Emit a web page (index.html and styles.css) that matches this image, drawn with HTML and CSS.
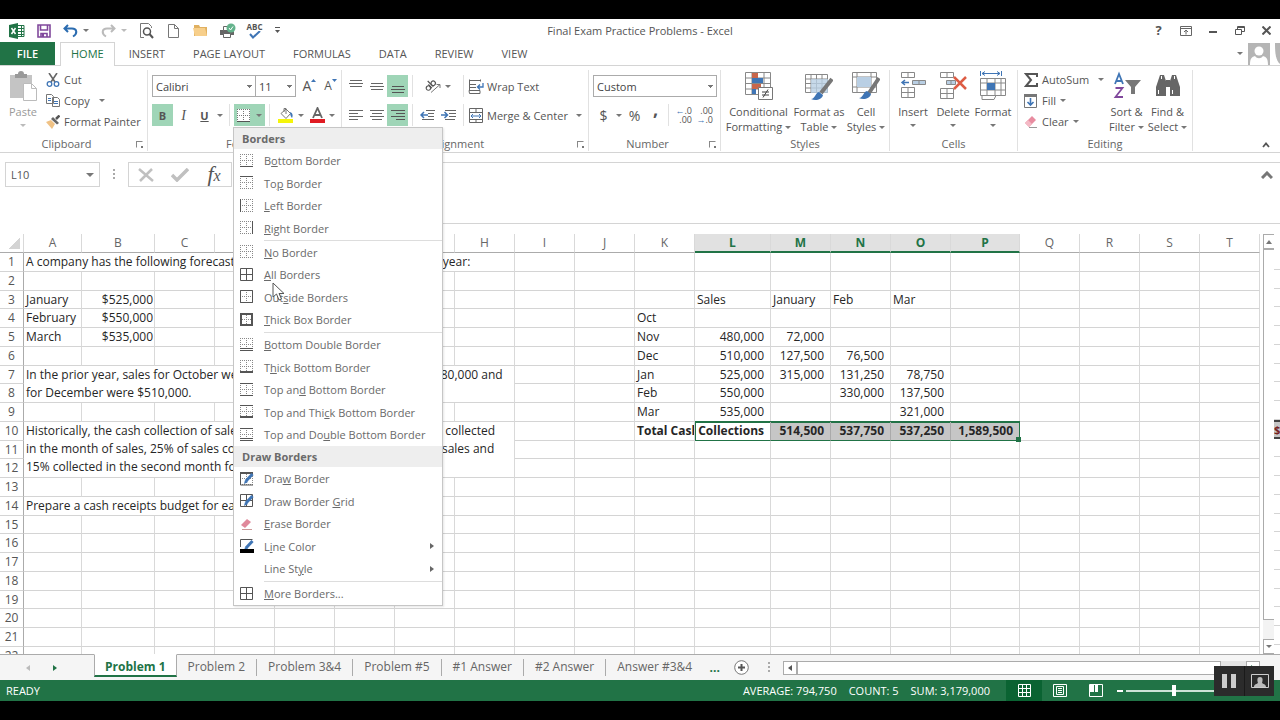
FILE: index.html
```html
<!DOCTYPE html>
<html lang="en">
<head>
    <meta charset="UTF-8">
    <meta name="viewport" content="width=device-width, initial-scale=1.0">
    <title>Final Exam Practice Problems - Excel</title>
    <link rel="stylesheet" href="styles.css">
</head>
<body>
    <header class="titlebar">
        <div class="quick-access">
            <button aria-label="Excel"><svg width="16" height="16"><path fill="#217346" d="M0 2l9-2v16l-9-2z"/><path fill="none" stroke="#217346" d="M9 2.500h6v11H9M9 5.500h6M9 8.500h6M9 11.500h6M12.500 3v10"/><path stroke="#fff" stroke-width="1.500" d="M2.500 5l4 6M6.500 5l-4 6"/></svg></button>
            <button aria-label="Save"><svg width="14" height="14"><path fill="none" stroke="#80489c" stroke-width="1.600" d="M1 1h12v12H1zM3.500 1v5h7V1M4 13V9.500h6V13"/><path fill="#80489c" d="M5 10h2v3H5z"/></svg></button>
            <button class="wide" aria-label="Undo"><svg width="15" height="14"><path fill="none" stroke="#2b6cb0" stroke-width="2" d="M5 1L1.500 4.500 5 8M2 4.500h7c5 0 6 5 1 8"/></svg><i class="caret"></i></button>
            <button class="wide" aria-label="Redo"><svg width="15" height="14"><path fill="none" stroke="#bbb" stroke-width="2" d="M10 1l3.500 3.500L10 8M13 4.500H6c-5 0-6 5-1 8"/></svg><i class="caret pale"></i></button>
            <button aria-label="Print preview"><svg width="15" height="16"><path fill="none" stroke="#777" d="M5 14.500H1.500V.5h8l3 3V5"/><circle cx="8" cy="8.500" r="3.500" fill="none" stroke="#555" stroke-width="1.500"/><path stroke="#555" stroke-width="2" d="M10.500 11l3.500 4"/></svg></button>
            <button aria-label="New"><svg width="11" height="14"><path fill="none" stroke="#777" d="M.5.5h6l4 4v9H.5zM6.500.5v4h4"/></svg></button>
            <button aria-label="Open"><svg width="16" height="13"><path fill="#e0b060" d="M1 12V1h5l1 2h7v9z"/><path fill="#f7cf8b" d="M0 4h12l2 8H2z"/></svg></button>
            <button aria-label="Quick print"><svg width="17" height="16"><path fill="#666" d="M1 7h14v5H1z"/><path fill="#fff" stroke="#666" d="M4.500 3.500h7v4h-7zM4.500 10.500h7v4h-7z"/><circle cx="12" cy="5" r="4.500" fill="#64b38c"/><path fill="none" stroke="#fff" d="M10 5l1.500 2L14 3.500"/></svg></button>
            <button class="spelling" aria-label="Spelling">ABC<svg width="12" height="8"><path fill="none" stroke="#3f75b5" stroke-width="2" d="M1 3l3 3.500L11 0"/></svg></button>
            <button class="narrow" aria-label="Customize"><svg width="7" height="7"><path stroke="#555" d="M1 .5h5"/><path fill="#555" d="M1 3h5L3.500 6z"/></svg></button>
        </div>
        <h1>Final Exam Practice Problems - Excel</h1>
        <div class="window-buttons">
            <button class="help" aria-label="Help">?</button>
            <button aria-label="Ribbon options"><svg width="12" height="10"><path fill="none" stroke="#666" d="M.5.5h11v9H.5zM1 2.500h10M6 8.500v-4M4 6l2-2 2 2"/></svg></button>
            <button aria-label="Minimize"><svg width="8" height="10"><path stroke="#555" stroke-width="2" d="M0 6h8"/></svg></button>
            <button aria-label="Restore"><svg width="10" height="9"><path fill="none" stroke="#555" d="M2.500 3V.5h7v5H7M.5 3.500h6v5h-6zM3 1.500h6"/></svg></button>
            <button aria-label="Close"><svg width="9" height="9"><path stroke="#555" stroke-width="2" d="M.5.5l8 8M8.500.5l-8 8"/></svg></button>
        </div>
    </header>

    <nav class="ribbon-tabs">
        <a class="file" href="#file">FILE</a>
        <a class="active" href="#home">HOME</a>
        <a href="#insert">INSERT</a>
        <a href="#layout">PAGE LAYOUT</a>
        <a href="#formulas">FORMULAS</a>
        <a href="#data">DATA</a>
        <a href="#review">REVIEW</a>
        <a href="#view">VIEW</a>
        <button class="account" aria-label="Account"><i class="caret"></i><svg width="22" height="22"><path fill="#b5b5b5" d="M0 0h22v22H0z"/><circle cx="11" cy="8" r="4.500" fill="#fff"/><path fill="#fff" d="M2 22c0-7 2-8 5-9 2 3 6 3 8 0 3 1 5 2 5 9z"/></svg><svg width="6" height="22"><path fill="#b5b5b5" d="M0 0h6v22C1 18 0 12 0 0z"/></svg></button>
    </nav>

    <section class="ribbon">
        <div class="group clipboard">
            <div class="tools">
                <button class="big disabled"><svg width="28" height="30"><path fill="#c4c4c4" d="M1 4h22v23H1z"/><path fill="#999" d="M6 3h3a3 3 0 0 1 6 0h3v4H6z"/><path fill="#fff" stroke="#bbb" d="M14.500 12.500h8l5 5v12h-13z"/><path fill="none" stroke="#bbb" d="M22.500 12.500v5h5"/></svg><span>Paste</span><i class="caret pale"></i></button>
                <div class="stack">
                    <button><svg width="14" height="14"><path stroke="#666" stroke-width="1.600" d="M3 0l6 9M11 0L5 9"/><circle cx="3.500" cy="11" r="2.300" fill="none" stroke="#3f75b5" stroke-width="1.300"/><circle cx="10.500" cy="11" r="2.300" fill="none" stroke="#3f75b5" stroke-width="1.300"/></svg>Cut</button>
                    <button><svg width="14" height="13"><path fill="#fff" stroke="#777" d="M.5.5h5l2 2v7h-7zM6.500 3.500h5l2 2v7h-7z"/><path stroke="#3f75b5" d="M2 4.500h3M2 6.500h3M8 7.500h4M8 9.500h4"/></svg>Copy<i class="caret spaced"></i></button>
                    <button><svg width="14" height="14"><path fill="#f0c285" d="M0 7l5-2 4 4-3 5z"/><path fill="#666" d="M5 4l2-2 6 6-2 1.500z"/><path stroke="#555" stroke-width="2.500" d="M10 4l3.500-3.500"/></svg>Format Painter</button>
                </div>
            </div>
            <footer><span>Clipboard</span><button class="launcher" aria-label="Clipboard settings"></button></footer>
        </div>

        <div class="group font">
            <div class="rows">
                <div class="row">
                    <select class="font-name" aria-label="Font"><option>Calibri</option></select>
                    <select class="font-size" aria-label="Font size"><option>11</option></select>
                    <button class="icon grow" aria-label="Increase font size">A<svg width="5" height="4"><path fill="#3f75b5" d="M0 3h5L2.500 0z"/></svg></button>
                    <button class="icon shrink" aria-label="Decrease font size">A<svg width="5" height="4"><path fill="#3f75b5" d="M0 0h5L2.500 3z"/></svg></button>
                </div>
                <div class="row">
                    <button class="icon on"><b>B</b></button>
                    <button class="icon italic"><i>I</i></button>
                    <button class="icon underline"><u>U</u></button>
                    <button class="drop" aria-label="Underline options"><i class="caret"></i></button>
                    <span class="sep"></span>
                    <div class="borders">
                        <button class="on" aria-label="Borders"><svg width="13" height="13"><path fill="#fff" d="M0 0h13v13H0z"/><path fill="none" stroke="#777" stroke-dasharray="1 1" d="M.5 0v13M12.500 0v13M6.500 0v13M0 .5h13M0 6.500h13"/><path stroke="#555" d="M0 12.500h13"/></svg><i class="caret"></i></button>
                        <ul class="menu" id="bordersMenu"></ul>
                    </div>
                    <span class="sep"></span>
                    <button class="color" aria-label="Fill color"><svg width="17" height="16"><path fill="#fff" stroke="#777" d="M4 6.500L9 2l4.500 4.500L9 11.500z"/><path fill="none" stroke="#777" d="M7 5V1.500h2V7"/><path fill="#3f75b5" d="M13 5c3 1 3 4 2 6-1-1-2-3-2-6z"/><path fill="#f5f50a" d="M1 12h15v4H1z"/></svg><i class="caret"></i></button>
                    <button class="color" aria-label="Font color"><svg width="15" height="16"><path fill="none" stroke="#666" stroke-width="1.800" d="M3 11L7.500 1 12 11M4.500 8h6"/><path fill="#e01b22" d="M0 12h15v4H0z"/></svg><i class="caret"></i></button>
                </div>
            </div>
            <footer><span>Font</span><button class="launcher" aria-label="Font settings"></button></footer>
        </div>

        <div class="group alignment">
            <div class="rows">
                <div class="row">
                    <button class="icon" aria-label="Top align"><svg width="14" height="14"><path stroke="#666" d="M1 1.500h12M0 4.500h14M1 7.500h12"/></svg></button>
                    <button class="icon" aria-label="Middle align"><svg width="14" height="14"><path stroke="#666" d="M1 4.500h12M0 7.500h14M1 10.500h12"/></svg></button>
                    <button class="icon on" aria-label="Bottom align"><svg width="14" height="14"><path stroke="#555" d="M1 7.500h12M0 10.500h14M1 13.500h12"/></svg></button>
                    <span class="sep"></span>
                    <button class="double" aria-label="Orientation"><svg width="16" height="14"><g transform="rotate(-45 8 8)" fill="none" stroke="#555" stroke-width="1.200"><circle cx="4" cy="5.500" r="2.200"/><path d="M6.500 3v5M8.500 0v8"/><circle cx="10.800" cy="5.500" r="2.200"/></g><path fill="none" stroke="#777" d="M6 13.500L15 5.500M11.500 5.500H15v3.500"/></svg><i class="caret"></i></button>
                    <span class="sep"></span>
                    <button class="text"><svg width="16" height="15"><path fill="none" stroke="#666" d="M1 1.500h11M12.500.5v2M1 5.500h7M1 8.500h7M1 11.500h11v3H1.500zM1.500.5v11"/><path fill="none" stroke="#3f75b5" stroke-width="1.300" d="M15 4v4h-5M12 5.500L9.500 8l2.500 2.500"/></svg>Wrap Text</button>
                </div>
                <div class="row">
                    <button class="icon" aria-label="Align left"><svg width="14" height="14"><path stroke="#666" d="M0 2.500h14M0 5.500h9M0 8.500h14M0 11.500h9"/></svg></button>
                    <button class="icon" aria-label="Center"><svg width="14" height="14"><path stroke="#666" d="M0 2.500h14M2 5.500h10M0 8.500h14M2 11.500h10"/></svg></button>
                    <button class="icon on" aria-label="Align right"><svg width="14" height="14"><path stroke="#555" d="M0 2.500h14M5 5.500h9M0 8.500h14M5 11.500h9"/></svg></button>
                    <span class="sep"></span>
                    <button class="icon" aria-label="Decrease indent"><svg width="16" height="12"><path stroke="#666" d="M6 1.500h9M8 4.500h6M8 7.500h6M2 10.500h12"/><path fill="none" stroke="#3f75b5" stroke-width="1.500" d="M8 6H1M4 3L1 6l3 3"/></svg></button>
                    <button class="icon" aria-label="Increase indent"><svg width="16" height="12"><path stroke="#666" d="M4 1.500h11M8 4.500h7M8 7.500h7M4 10.500h10"/><path fill="none" stroke="#3f75b5" stroke-width="1.500" d="M0 6h6M3.500 3l3 3-3 3"/></svg></button>
                    <span class="sep"></span>
                    <button class="text"><svg width="16" height="15"><path fill="none" stroke="#666" d="M1.500.5h13v14h-13zM1 4.500h14M1 11.500h14M8 .5v4M8 11.500v3"/><path fill="none" stroke="#3f75b5" d="M3 8h10M5 6L3 8l2 2M11 6l2 2-2 2"/></svg>Merge &amp; Center<i class="caret spaced"></i></button>
                </div>
            </div>
            <footer><span>Alignment</span><button class="launcher" aria-label="Alignment settings"></button></footer>
        </div>

        <div class="group number">
            <div class="rows">
                <div class="row"><select class="format" aria-label="Number format"><option>Custom</option></select></div>
                <div class="row">
                    <button class="icon sign">$</button>
                    <button class="drop" aria-label="Currency"><i class="caret"></i></button>
                    <button class="icon sign">%</button>
                    <button class="icon comma" aria-label="Comma style"><b>,</b></button>
                    <span class="sep"></span>
                    <button class="icon decimals" aria-label="Increase decimal"><span><em>←</em>.0</span><span>.00</span></button>
                    <button class="icon decimals" aria-label="Decrease decimal"><span>.00</span><span><em>→</em>.0</span></button>
                </div>
            </div>
            <footer><span>Number</span><button class="launcher" aria-label="Number settings"></button></footer>
        </div>

        <div class="group styles">
            <div class="tools">
                <button class="big"><svg width="28" height="30"><path fill="#fff" stroke="#888" d="M.5 1.500h25v22H.5zM.5 7h25M.5 12.500h25M.5 18h25M7 1.500v22M19 1.500v22"/><path fill="#c8664b" d="M7 2h6v5H7zM7 13h9v5H7z"/><path fill="#3f75b5" d="M7 7h11v5H7zM7 18h4v5H7z"/><path fill="#fff" stroke="#777" d="M13.500 16.500h14v12h-14z"/><path stroke="#444" d="M17 21h7M17 24h7M23 18.500l-5 8"/></svg><span>Conditional</span><span>Formatting<i class="caret"></i></span></button>
                <button class="big"><svg width="28" height="30"><path fill="#fff" stroke="#888" d="M.5 3.500h22v18H.5zM.5 8h22M.5 12.500h22M.5 17h22M6 3.500v18M11.500 3.500v18M17 3.500v18"/><path fill="#b9cfe4" opacity=".8" d="M6 8h17v14H6z"/><path stroke="#777" stroke-width="4" d="M27 8L16 22"/><path fill="#3f75b5" d="M6 28c4 0 4-6 8-7l4 3c-1 5-8 6-12 4z"/></svg><span>Format as</span><span>Table<i class="caret"></i></span></button>
                <button class="big"><svg width="28" height="30"><path fill="#fff" stroke="#888" d="M.5 1.500h24v20H.5zM.5 6h24M.5 16h24M5 1.500v20M19 1.500v20"/><path fill="#b9cfe4" d="M5 6h14v10H5z"/><path stroke="#777" stroke-width="4" d="M27 7L17 22"/><path fill="#3f75b5" d="M7 27c4 0 4-6 8-7l4 3c-1 5-8 6-12 4z"/></svg><span>Cell</span><span>Styles<i class="caret"></i></span></button>
            </div>
            <footer><span>Styles</span></footer>
        </div>

        <div class="group cells">
            <div class="tools">
                <button class="big"><svg width="26" height="30"><path fill="#fff" stroke="#888" d="M1.500 1.500h13v5h-13zM8 1.500v5M1.500 16.500h13v10h-13zM1.500 21.500h13M8 16.500v10"/><path fill="#b9cfe4" stroke="#888" d="M12.500 9.500h13v4h-13zM19 9.500v4"/><path fill="none" stroke="#3f75b5" stroke-width="1.500" d="M9 11.500H2M5 9l-3 2.500L5 14"/></svg><span>Insert</span><i class="caret"></i></button>
                <button class="big"><svg width="28" height="30"><path fill="#fff" stroke="#888" d="M1.500 1.500h13v5h-13zM8 1.500v5M1.500 17.500h13v10h-13zM1.500 22.500h13M8 17.500v10"/><path fill="#b9cfe4" stroke="#888" d="M7.500 9.500h9v4h-9zM12 9.500v4"/><path stroke="#dd5c44" stroke-width="2.500" d="M15 6l12 12M27 6L15 18"/></svg><span>Delete</span><i class="caret"></i></button>
                <button class="big"><svg width="27" height="30"><path fill="none" stroke="#3f75b5" d="M.5 0v5M21.500 0v5M2 2.500h18M5 .5l-3 2 3 2M17 .5l3 2-3 2"/><path fill="#fff" stroke="#888" d="M.5 7.500h25v17H.5zM.5 12h25M.5 19h25M7 7.500v17M15 7.500v17M21 7.500v17M2 24.500v4h12l2-4"/><path fill="#3f75b5" d="M7 12h8v7H7z"/></svg><span>Format</span><i class="caret"></i></button>
            </div>
            <footer><span>Cells</span></footer>
        </div>

        <div class="group editing">
            <div class="tools">
                <div class="stack">
                    <button><svg width="14" height="14"><path fill="none" stroke="#555" stroke-width="2" d="M13 4V1H2l5 6-5 6h11v-3"/></svg>AutoSum<i class="caret spaced"></i></button>
                    <button><svg width="14" height="14"><path fill="#fff" stroke="#777" d="M.5.5h12v13H.5z"/><path fill="#777" d="M0 0h13v3H0z"/><path fill="none" stroke="#3f75b5" stroke-width="1.600" d="M6.500 4v7M3.500 8l3 3 3-3"/></svg>Fill<i class="caret"></i></button>
                    <button><svg width="14" height="14"><path fill="#e88ca0" d="M1 8l7-7 4 4-7 7z"/><path fill="#f4b9c5" d="M1 8l3-3 4 4-3 3z"/><path stroke="#999" d="M5 12.500h8"/></svg>Clear<i class="caret"></i></button>
                </div>
                <button class="big"><svg width="28" height="30"><path fill="none" stroke="#3f75b5" stroke-width="1.800" d="M2 13L6 3l4 10M3.500 10h5"/><path fill="none" stroke="#80489c" stroke-width="1.800" d="M2.500 17h7l-7 9h7.500"/><path fill="#777" d="M12 9h16l-6 7v7h-4v-7z"/></svg><span>Sort &amp;</span><span>Filter<i class="caret"></i></span></button>
                <button class="big"><svg width="26" height="30"><path fill="#666" d="M5 4h4l2 6v15H1V16zM17 4h4l4 12v9H15V10zM11 9h4v7h-4z"/><path fill="#fff" d="M6 5h1v3H6zM19 5h1v3h-1zM3 19h1v4H3zM17 19h1v4h-1z"/></svg><span>Find &amp;</span><span>Select<i class="caret"></i></span></button>
            </div>
            <footer><span>Editing</span></footer>
        </div>
        <button class="collapse" aria-label="Collapse ribbon"><svg width="8" height="6"><path fill="none" stroke="#555" stroke-width="1.800" d="M1 5l3-3.500L7 5"/></svg></button>
    </section>

    <section class="formula-bar">
        <div class="name-box"><input type="text" value="L10" aria-label="Name box"><i class="caret large"></i></div>
        <span class="dots"></span>
        <div class="fx">
            <button aria-label="Cancel"><svg width="16" height="14"><path fill="none" stroke="#c0c0c0" stroke-width="2.500" d="M1 1l14 12M14 1L2 13"/></svg></button>
            <button aria-label="Enter"><svg width="18" height="14"><path fill="none" stroke="#c0c0c0" stroke-width="3.500" d="M1 7l5 5L17 1"/></svg></button>
            <button class="fn" aria-label="Insert function"><i>f<small>x</small></i></button>
        </div>
        <div class="formula"><textarea aria-label="Formula"></textarea><button aria-label="Collapse formula bar"><svg width="12" height="8"><path fill="none" stroke="#777" stroke-width="3" d="M1 7l5-5 5 5"/></svg></button></div>
    </section>

    <main class="sheet">
        <div class="grid">
            <table>
                <colgroup id="cols"></colgroup>
                <thead id="head"></thead>
                <tbody id="rows"></tbody>
            </table>
        </div>
        <div class="scroll-y">
            <button aria-label="Scroll up"><i class="caret up"></i></button>
            <span class="thumb"></span>
            <button aria-label="Scroll down"><i class="caret"></i></button>
        </div>
        <div class="edge" id="edge"></div>
    </main>

    <nav class="sheet-tabs">
        <button aria-label="Previous sheet"><i class="arrow left"></i></button>
        <button aria-label="Next sheet"><i class="arrow right"></i></button>
        <a class="active" href="#p1">Problem 1</a>
        <a href="#p2">Problem 2</a>
        <a href="#p3">Problem 3&amp;4</a>
        <a href="#p5">Problem #5</a>
        <a href="#a1">#1 Answer</a>
        <a href="#a2">#2 Answer</a>
        <a class="last" href="#a3">Answer #3&amp;4</a>
        <button class="more">...</button>
        <button aria-label="New sheet"><svg width="15" height="15"><circle cx="7.500" cy="7.500" r="6.800" fill="#fff" stroke="#777"/><path stroke="#555" stroke-width="2" d="M4 7.500h7M7.500 4v7"/></svg></button>
        <span class="dots"></span>
        <div class="scroll-x">
            <button aria-label="Scroll left"><i class="arrow left dark"></i></button>
            <span class="thumb"></span>
            <button class="end" aria-label="Scroll right"><i class="arrow right"></i></button>
        </div>
    </nav>

    <footer class="status">
        <span class="ready">READY</span>
        <span>AVERAGE: 794,750</span>
        <span>COUNT: 5</span>
        <span>SUM: 3,179,000</span>
        <div class="views">
            <button class="on" aria-label="Normal"><svg width="13" height="13"><path fill="none" stroke="#fff" d="M.5.5h12v12H.5zM.5 4.500h12M.5 8.500h12M4.500.5v12M8.500.5v12"/></svg></button>
            <button aria-label="Page layout"><svg width="14" height="13"><path fill="none" stroke="#fff" d="M.5.5h13v12H.5zM3.500 2.500h7v8h-7zM5 4.500h4M5 6.500h4M5 8.500h4"/></svg></button>
            <button aria-label="Page break"><svg width="14" height="13"><path fill="none" stroke="#fff" d="M.5.5h13v12H.5z"/><path fill="#fff" d="M1 1h4v7H1zM6 1h3v7H6z"/></svg></button>
        </div>
        <button class="zoom-out" aria-label="Zoom out"></button>
        <input type="range" aria-label="Zoom" min="0" max="100" value="50">
    </footer>

    <div class="recorder">
        <button aria-label="Pause"><svg width="14" height="14"><path fill="#ccc" d="M0 0h5v14H0zM9 0h5v14H9z"/></svg></button>
        <button aria-label="Webcam"><svg width="18" height="14"><path fill="none" stroke="#ccc" d="M.5.500h17v13H.5z"/><path fill="#bbb" d="M3 13c0-3 3-3 4-4-1-3-1-6 2-6s3 3 2 6c1 1 4 1 4 4z"/></svg></button>
    </div>
    <svg class="pointer" width="13" height="19" aria-hidden="true"><path fill="#fff" stroke="#555" d="M1 1v14l3.500-3 2.500 6 2.500-1L7 11.500h5z"/></svg>

    <script src="script.js"></script>
</body>
</html>
```
FILE: styles.css
```css
* {
    box-sizing: border-box;
}
body {
    margin: 0;
    padding: 19px 0;
    height: 100vh;
    display: flex;
    flex-direction: column;
    background: #000;
    color: #555;
    font-family: "Open Sans", "Noto Sans", sans-serif;
    font-size: 11px;
    line-height: 15px;
    overflow: hidden;
}
button, input, select, textarea {
    font: inherit;
    color: inherit;
    margin: 0;
    padding: 0;
    border: none;
    border-radius: 0;
    background: none;
}
button {
    display: flex;
    align-items: center;
    justify-content: center;
    white-space: nowrap;
}
a {
    color: inherit;
    text-decoration: none;
}
svg {
    flex: none;
}

/* small triangles */
.caret {
    flex: none;
    display: inline-block;
    border: 3px solid transparent;
    border-top-color: #777;
    border-bottom: none;
}
.caret.pale {
    border-top-color: #bbb;
}
.caret.large {
    border-width: 4px;
    border-bottom: none;
}
.caret.up {
    border-top: none;
    border-bottom: 4px solid #777;
}
.caret.spaced {
    margin-left: 5px;
}
.arrow {
    border: 4px solid transparent;
    border-width: 3px 4px;
}
.arrow.left {
    border-left: none;
    border-right-color: #bbb;
}
.arrow.left.dark {
    border-right-color: #555;
}
.arrow.right {
    border-right: none;
    border-left-color: #217346;
}

/* title bar */
.titlebar {
    display: grid;
    grid-template-columns: 1fr auto 1fr;
    height: 23px;
    background: #fff;
}
.titlebar h1 {
    margin: 0;
    font-size: 11px;
    font-weight: normal;
    line-height: 23px;
}
.quick-access, .window-buttons {
    display: flex;
}
.quick-access {
    padding-left: 3px;
}
.quick-access button, .window-buttons button {
    width: 27px;
}
.quick-access .wide {
    width: 38px;
    gap: 5px;
}
.quick-access .narrow {
    width: 18px;
}
.quick-access .spelling {
    flex-direction: column;
    font-size: 8px;
    font-weight: bold;
    line-height: 8px;
}
.window-buttons {
    justify-content: flex-end;
}
.help {
    font-size: 13px;
    font-weight: bold;
}

/* ribbon tabs */
.ribbon-tabs {
    display: flex;
    height: 24px;
    background: #fff;
    border-bottom: 1px solid #d4d4d4;
    line-height: 24px;
}
.ribbon-tabs a {
    padding: 0 14px;
}
.ribbon-tabs .file {
    width: 55px;
    margin-right: 5px;
    text-align: center;
    background: #217346;
    color: #fff;
    font-weight: 600;
}
.ribbon-tabs .active {
    height: 24px;
    padding: 0 10px;
    border: 1px solid #d4d4d4;
    border-bottom: none;
    background: #fff;
    color: #217346;
    line-height: 22px;
}
.account {
    margin-left: auto;
    gap: 5px;
}
.account svg:last-child {
    margin-right: -1px;
}

/* ribbon */
.ribbon {
    display: flex;
    height: 87px;
    background: #fff;
    border-bottom: 1px solid #d4d4d4;
}
.group {
    display: flex;
    flex-direction: column;
    justify-content: space-between;
    margin: 4px 0 1px;
    border-right: 1px solid #e1e1e1;
}
.clipboard { width: 148px; }
.font { width: 194px; }
.alignment { width: 247px; }
.number { width: 132px; }
.styles { width: 169px; }
.cells { width: 128px; }
.editing { width: 175px; }
.group footer {
    display: flex;
    align-items: center;
    height: 15px;
    color: #666;
}
.group footer span {
    flex: 1;
    text-align: center;
}
.launcher {
    width: 7px;
    height: 7px;
    margin: 2px 4px 0 3px;
    border: 1px solid #888;
    border-right-color: transparent;
    border-bottom-color: transparent;
    background: linear-gradient(#777, #777) 4px 4px / 2px 2px no-repeat;
}
.tools {
    display: flex;
}
.stack {
    margin-top: -1px;
}
.stack button {
    height: 21px;
    gap: 4px;
}
.clipboard .tools {
    padding-left: 4px;
}
.clipboard .stack {
    padding-left: 4px;
}
.big {
    flex-direction: column;
    justify-content: flex-start;
    width: 38px;
    padding-top: 1px;
}
.big svg {
    margin-bottom: 3px;
}
.big > .caret {
    margin-top: 5px;
}
.big span .caret {
    margin: 0 0 2px 3px;
}
.disabled {
    color: #999;
}
.styles .tools {
    padding-left: 4px;
}
.styles .big:nth-child(1) { width: 67px; }
.styles .big:nth-child(2) { width: 54px; }
.styles .big:nth-child(3) { width: 40px; }
.cells .tools {
    padding-left: 3px;
}
.cells .big {
    width: 40px;
}
.editing .tools {
    padding-left: 6px;
}
.editing .stack {
    width: 82px;
}
.editing .big {
    width: 41px;
}
.rows {
    display: flex;
    flex-direction: column;
    gap: 7px;
    padding: 5px 0 0 4px;
}
.row {
    display: flex;
    height: 22px;
}
.row .icon {
    width: 21px;
}
.on {
    background: #9fd5b7;
}
.row .drop {
    width: 10px;
}
.row .double {
    width: 42px;
    gap: 4px;
}
.row .text {
    gap: 3px;
}
.sep {
    width: 1px;
    margin: 0 4px;
    background: #e1e1e1;
}
.number .sep {
    margin: 0 2px;
}
.alignment .rows {
    padding-left: 3px;
}
select {
    appearance: none;
    height: 22px;
    padding: 0 3px;
    border: 1px solid #ababab;
    background: conic-gradient(from -45deg at 50% 100%, #777 90deg, transparent 0) right 3px center / 6px 3px no-repeat;
    background-color: #fff;
    color: #444;
}
.font-name {
    width: 104px;
}
.font-size {
    width: 41px;
    margin-left: -1px;
}
.format {
    width: 124px;
}
.grow, .shrink {
    align-items: flex-start;
}
.row .grow {
    font-size: 14px;
    line-height: 22px;
    margin-left: 3px;
}
.row .shrink {
    font-size: 12px;
    line-height: 22px;
}
.grow svg, .shrink svg {
    margin-top: 4px;
}
.row .italic {
    font-family: "Liberation Serif", serif;
    font-size: 14px;
}
.underline {
    font-weight: bold;
}
.borders {
    position: relative;
}
.borders > button {
    width: 31px;
    height: 22px;
    gap: 6px;
}
.row .color {
    width: 32px;
    gap: 4px;
}
.row .sign {
    font-size: 14px;
}
.row .comma {
    font-size: 18px;
    line-height: 10px;
    align-items: flex-start;
}
.row .decimals {
    flex-direction: column;
    align-items: flex-end;
    font-size: 9px;
    line-height: 9px;
}
.decimals em {
    color: #3f75b5;
    font-style: normal;
}
.collapse {
    align-self: flex-end;
    margin: 0 10px 4px auto;
}

/* borders drop-down */
.menu {
    position: absolute;
    z-index: 2;
    top: 23px;
    left: -1px;
    width: 210px;
    margin: 0;
    padding: 0;
    border: 1px solid #c6c6c6;
    background: #fff;
    box-shadow: 1px 1px 2px rgba(0,0,0,0.1);
    color: #6a6a6a;
    list-style: none;
}
.menu button {
    width: 100%;
    height: 22px;
    justify-content: flex-start;
    gap: 10px;
    padding-left: 6px;
}
.menu li:nth-of-type(even) button {
    height: 23px;
}
.menu button span {
    flex: 1;
    text-align: left;
}
.menu .title {
    height: 21px;
    padding-left: 8px;
    background: #eee;
    font-weight: bold;
    line-height: 22px;
}
.menu .line {
    border-top: 1px solid #ddd;
    margin: 1px 0 0 30px;
}
.menu .arrow {
    margin-right: 8px;
    border-left-color: #666;
}

/* formula bar */
.formula-bar {
    display: flex;
    align-items: flex-start;
    height: 71px;
    padding: 9px 0 0 5px;
    background: #fff;
}
.name-box {
    display: flex;
    align-items: center;
    width: 95px;
    height: 25px;
    padding: 0 5px;
    border: 1px solid #d4d4d4;
}
.name-box input {
    flex: 1;
    min-width: 0;
}
.dots {
    width: 2px;
    height: 11px;
    margin: 7px 13px;
    background: repeating-linear-gradient(#aaa 0 2px, transparent 2px 4px);
}
.fx {
    display: flex;
    width: 104px;
    height: 25px;
    border: 1px solid #d4d4d4;
}
.fx button {
    flex: 1;
}
.fn {
    font-family: "Liberation Serif", serif;
    font-size: 22px;
}
.fn small {
    font-size: 16px;
}
.formula {
    flex: 1;
    display: flex;
    align-items: flex-start;
    height: 62px;
    margin-left: 3px;
    border: 1px solid #d4d4d4;
    border-right: none;
}
.formula textarea {
    flex: 1;
    height: 100%;
    resize: none;
}
.formula button {
    margin: 8px 7px;
}

/* sheet */
.sheet {
    flex: 1;
    min-height: 0;
    display: flex;
    padding-top: 10px;
    background: #fff;
}
.grid {
    flex: 1;
    min-width: 0;
    overflow: hidden;
}
table {
    width: 100%;
    table-layout: fixed;
    border-collapse: separate;
    border-spacing: 0;
    color: #262626;
    font-size: 12px;
    line-height: 18px;
}
th, td {
    height: 19px;
    padding: 0 2px;
    border-right: 1px solid #d9d9d9;
    border-bottom: 1px solid #d4d4d4;
    text-align: left;
    vertical-align: top;
    white-space: nowrap;
}
thead th {
    height: 18px;
    border-bottom-color: #ababab;
    text-align: center;
    font-weight: normal;
    line-height: 17px;
    color: #666;
}
tbody tr:nth-child(4n + 3) > * {
    height: 18px;
    line-height: 17px;
}
tbody th {
    border-right-color: #ababab;
    color: #555;
    font-weight: normal;
    text-align: center;
}
tbody tr .merged {
    line-height: 18px;
}
.corner {
    background: linear-gradient(135deg, transparent 50%, #d4d4d4 50%) right 3px bottom 3px / 11px 11px no-repeat;
}
thead .picked {
    background: #e1e1e1;
    border-bottom: 2px solid #217346;
    color: #217346;
    font-weight: bold;
}
.num {
    text-align: right;
    padding-right: 6px;
}
.num.tight {
    padding-right: 1px;
}
.strong {
    font-weight: bold;
}
.strong:not(.sel) {
    overflow: hidden;
}
.sel {
    position: relative;
    background: #c6c6c6;
    border-right-color: #aaa;
    border-bottom-color: #217346;
    box-shadow: inset 0 1px #217346, 0 -1px #217346;
}
.sel.first {
    background: #fff;
    box-shadow: inset 1px 1px #217346, 0 -1px #217346;
}
.sel.end {
    border-right-color: #217346;
}
.sel.end::after {
    content: "";
    position: absolute;
    right: -2px;
    bottom: -2px;
    width: 5px;
    height: 5px;
    background: #217346;
}
.scroll-y {
    display: flex;
    flex-direction: column;
    width: 11px;
    margin-left: 3px;
    background: #f3f3f3;
}
.scroll-y button {
    height: 15px;
    border: 1px solid #ababab;
    border-right: none;
    background: #fff;
}
.scroll-y .thumb {
    flex: 1;
    margin-bottom: 19px;
    border: 1px solid #ababab;
    border-right: none;
    background: #fff;
}
.edge {
    width: 6px;
    padding-top: 17px;
    overflow: hidden;
}
.edge div {
    height: 19px;
    border-bottom: 1px solid #d4d4d4;
}
.edge div:nth-child(4n + 3) {
    height: 18px;
}
.edge .mark {
    background: #c6c6c6;
    border-top: 2px solid #444;
    border-bottom: 2px solid #444;
    color: #722;
    font-weight: bold;
}

/* sheet tabs */
.sheet-tabs {
    display: flex;
    height: 26px;
    padding-left: 14px;
    background: #f5f5f5;
    border-top: 1px solid #ababab;
    font-size: 12px;
    color: #666;
}
.sheet-tabs > button {
    width: 27px;
}
.sheet-tabs a {
    height: 17px;
    margin-top: 4px;
    padding: 0 11px;
    border-right: 1px solid #ababab;
    line-height: 16px;
    white-space: nowrap;
}
.sheet-tabs .active {
    height: 23px;
    margin: -1px 0 0 26px;
    padding: 0 10px;
    border: 1px solid #ababab;
    border-top-color: #fff;
    border-bottom: 2px solid #217346;
    background: #fff;
    color: #217346;
    font-weight: bold;
    line-height: 24px;
}
.sheet-tabs .last {
    border-right: none;
    margin-right: -2px;
}
.sheet-tabs .more {
    color: #217346;
    font-weight: bold;
}
.scroll-x {
    flex: 1;
    display: flex;
    height: 14px;
    margin: 6px 20px 0 0;
    background: #e4e4e4;
}
.scroll-x button {
    width: 14px;
    border: 1px solid #ababab;
    background: #fff;
}
.scroll-x .thumb {
    flex: 1;
    margin-right: 25px;
    border: 1px solid #ababab;
    background: #fff;
}

/* status bar */
.status {
    display: flex;
    align-items: center;
    gap: 12px;
    height: 21px;
    padding: 0 6px;
    background: #217346;
    color: #fff;
    font-size: 11px;
}
.ready {
    margin-right: auto;
}
.views {
    display: flex;
    align-self: stretch;
    margin-left: 4px;
}
.views button {
    width: 36px;
}
.views .on {
    background: #0a6332;
}
.zoom-out {
    width: 6px;
    height: 2px;
    margin-left: -9px;
    background: #fff;
}
.status input {
    appearance: none;
    width: 96px;
    height: 2px;
    margin: 0 52px 0 -9px;
    background: #cfe3d7;
}
.status input::-webkit-slider-thumb {
    appearance: none;
    width: 4px;
    height: 11px;
    background: #fff;
}

/* screen recorder controls */
.recorder {
    position: absolute;
    z-index: 3;
    right: 6px;
    bottom: 24px;
    display: flex;
    height: 30px;
    background: #2b2b2b;
}
.recorder button {
    width: 30px;
}
.recorder button + button {
    border-left: 1px solid #1a1a1a;
}
.pointer {
    position: absolute;
    z-index: 3;
    left: 272px;
    top: 282px;
}
```
FILE: script.js
```javascript
const letters = 'ABCDEFGHIJKLMNOPQRST'.split('');
const widths = [24, 58, 73, 60, 60, 60, 60, 60, 60, 60, 60, 60, 76, 60, 60, 60, 69, 60, 60, 60];

// key: cell name, value: text
const cells = {
    A1: 'A company has the following forecasted sales for the first 3 months of this year:',
    A3: 'January', A4: 'February', A5: 'March',
    B3: '$525,000', B4: '$550,000', B5: '$535,000',
    A7: 'In the prior year, sales for October were $450,000, and November were $480,000 and<br>for December were $510,000.',
    A10: 'Historically, the cash collection of sales has been as follows: 60% of sales is collected<br>in the month of sales, 25% of sales collected in the next month after these sales and<br>15% collected in the second month following.',
    A14: 'Prepare a cash receipts budget for each month',
    L3: 'Sales', M3: 'January', N3: 'Feb', O3: 'Mar',
    K4: 'Oct', K5: 'Nov', K6: 'Dec', K7: 'Jan', K8: 'Feb', K9: 'Mar', K10: 'Total Cash',
    L5: '480,000', L6: '510,000', L7: '525,000', L8: '550,000', L9: '535,000', L10: 'Collections',
    M5: '72,000', M6: '127,500', M7: '315,000', M10: '514,500',
    N6: '76,500', N7: '131,250', N8: '330,000', N10: '537,750',
    O7: '78,750', O8: '137,500', O9: '321,000', O10: '537,250', P10: '1,589,500'
};
// key: first cell, value: [columns, rows]
const merged = { A1: [8, 1], A7: [8, 2], A10: [8, 3], A14: [5, 1] };
const picked = ['L', 'M', 'N', 'O', 'P'];

document.getElementById('cols').innerHTML =
    widths.map(w => `<col style="width:${w}px">`).join('') + '<col>';
document.getElementById('head').innerHTML = '<tr><th class="corner"></th>' +
    letters.map(l => `<th class="${picked.includes(l) ? 'picked' : ''}">${l}</th>`).join('') + '</tr>';

const covered = new Set();
let html = '';
for (let r = 1; r <= 22; r++) {
    html += `<tr><th>${r}</th>`;
    letters.forEach((l, c) => {
        const key = l + r;
        if (covered.has(key)) return;
        const [cols, rows] = merged[key] || [1, 1];
        for (let y = 0; y < rows; y++) {
            for (let x = 0; x < cols; x++) covered.add(letters[c + x] + (r + y));
        }
        const text = cells[key] || '';
        const names = [];
        if (rows > 1) names.push('merged');
        if (/^[$\d][\d,]+$/.test(text) || key === 'L10') names.push('num');
        if (l === 'B') names.push('tight');
        if (r === 10 && c >= 10 && text) names.push('strong');
        if (r === 10 && picked.includes(l)) names.push('sel');
        if (key === 'L10') names.push('first');
        if (key === 'P10') names.push('end');
        html += `<td class="${names.join(' ')}" colspan="${cols}" rowspan="${rows}">${text}</td>`;
    });
    html += '</tr>';
}
document.getElementById('rows').innerHTML = html;

let edge = '';
for (let r = 1; r <= 22; r++) {
    edge += `<div class="${r === 10 ? 'mark' : ''}">${r === 10 ? '$' : ''}</div>`;
}
document.getElementById('edge').innerHTML = edge;

// borders menu
const solid = d => `<path fill="none" stroke="#555" d="${d}"/>`;
const thick = d => `<path fill="none" stroke="#555" stroke-width="2" d="${d}"/>`;
const dotted = '<path fill="none" stroke="#888" stroke-dasharray="1 1" d="M.5 0v13M12.500 0v13M6.500 0v13M0 .5h13M0 6.500h13M0 12.500h13"/>';
const pen = '<path stroke="#3f75b5" stroke-width="3" d="M12.500 2L6 9"/><path fill="#3f75b5" d="M4 12l1-4 3 2z"/>';
const all = solid('M.5.5h12v12H.5zM.5 6.500h12M6.500.5v12');

const items = [
    { title: 'Borders' },
    ['B<u>o</u>ttom Border', dotted + solid('M0 12.500h13')],
    ['To<u>p</u> Border', dotted + solid('M0 .5h13')],
    ['<u>L</u>eft Border', dotted + solid('M.5 0v13')],
    ['<u>R</u>ight Border', dotted + solid('M12.500 0v13')],
    null,
    ['<u>N</u>o Border', dotted],
    ['<u>A</u>ll Borders', all],
    ['Out<u>s</u>ide Borders', dotted + solid('M.5.5h12v12H.5z')],
    ['<u>T</u>hick Box Border', dotted + thick('M1 1h11v11H1z')],
    null,
    ['<u>B</u>ottom Double Border', dotted + solid('M0 10.500h13M0 12.500h13')],
    ['T<u>h</u>ick Bottom Border', dotted + thick('M0 12h13')],
    ['Top an<u>d</u> Bottom Border', dotted + solid('M0 .5h13M0 12.500h13')],
    ['Top and Thi<u>c</u>k Bottom Border', dotted + solid('M0 .5h13') + thick('M0 12h13')],
    ['Top and Do<u>u</u>ble Bottom Border', dotted + solid('M0 .5h13M0 10.500h13M0 12.500h13')],
    { title: 'Draw Borders' },
    ['Dra<u>w</u> Border', dotted + thick('M0 1h13') + solid('M.5 0v13H13') + pen],
    ['Draw Border <u>G</u>rid', all + pen],
    ['<u>E</u>rase Border', '<path fill="#e0899b" d="M1 8l6-6 4 3-6 6z"/><path stroke="#c99" d="M2 12.500h10"/>'],
    ['L<u>i</u>ne Color', solid('M.5 8V.5h12') + pen + '<path d="M0 10h14v4H0z"/>', true],
    ['Line St<u>y</u>le', '', true],
    null,
    ['<u>M</u>ore Borders...', all]
];

document.getElementById('bordersMenu').innerHTML = items.map(item => {
    if (!item) return '<li class="line"></li>';
    if (item.title) return `<li class="title">${item.title}</li>`;
    const arrow = item[2] ? '<i class="arrow right"></i>' : '';
    return `<li><button><svg width="14" height="14">${item[1]}</svg><span>${item[0]}</span>${arrow}</button></li>`;
}).join('');
```
